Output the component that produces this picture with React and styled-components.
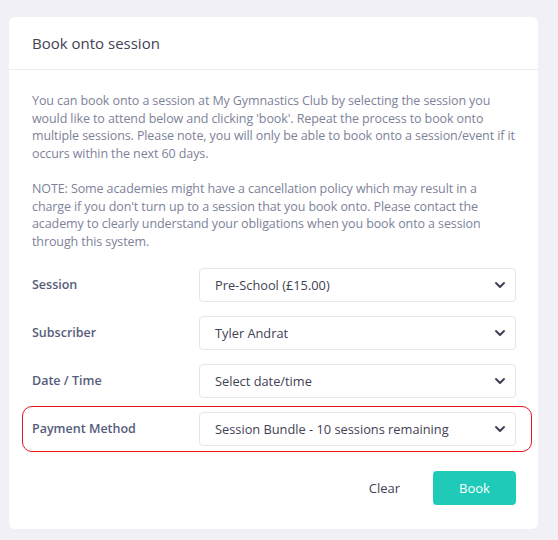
import React from "react";
import styled, { createGlobalStyle } from "styled-components";
import { ChevronDown } from "lucide-react";

const GlobalStyle = createGlobalStyle`
  html, body {
    margin: 0;
    padding: 0;
    background: #f0f0f6;
    font-family: "Open Sans", "Liberation Sans", sans-serif;
  }
`;

const Page = styled.div`
  padding: 17px 20px 11px 9px;
`;

const Card = styled.div`
  background: #ffffff;
  border-radius: 6px;
`;

const CardHeader = styled.div`
  height: 52px;
  display: flex;
  align-items: center;
  padding: 0 23px;
  border-bottom: 1px solid #ebedf3;
`;

const Title = styled.h3`
  margin: 0;
  font-size: 15px;
  font-weight: 400;
  color: #3f4254;
`;

const CardBody = styled.div`
  padding: 22px 22px 24px 23px;
`;

const Text = styled.p`
  margin: 0 0 17.6px;
  font-size: 12.5px;
  line-height: 17.6px;
  color: #7e8299;
  letter-spacing: -0.1px;
  white-space: nowrap;
`;

const Form = styled.div`
  display: flex;
  flex-direction: column;
  gap: 14px;
  margin-top: 17px;
`;

const Row = styled.div`
  display: grid;
  grid-template-columns: 167px 1fr;
  align-items: center;
  ${(p) =>
    p.$highlight &&
    `
    margin: -6px -16px -6px -10px;
    padding: 5px 15px 5px 9px;
    border: 1px solid #e8161b;
    border-radius: 10px;
  `}
`;

const Label = styled.label`
  font-size: 12.5px;
  font-weight: 600;
  color: #555d7a;
  margin-top: -1px;
`;

const SelectWrap = styled.div`
  position: relative;
`;

const Select = styled.select`
  width: 100%;
  height: 34px;
  appearance: none;
  border: 1px solid #e4e6ef;
  border-radius: 4px;
  background: #ffffff;
  padding: 0 32px 0 15px;
  font-family: inherit;
  font-size: 12.8px;
  color: #3f4254;
  outline: none;
`;

const Chevron = styled(ChevronDown)`
  position: absolute;
  right: 8px;
  top: 50%;
  transform: translateY(-50%);
  pointer-events: none;
  color: #3f4254;
`;

const Actions = styled.div`
  display: flex;
  justify-content: flex-end;
  align-items: center;
  gap: 17px;
  margin-top: 25px;
`;

const Button = styled.button`
  height: 34px;
  border: none;
  border-radius: 4px;
  font-family: inherit;
  font-size: 13px;
  padding: 0 ${(p) => (p.$primary ? "0" : "16px")};
  width: ${(p) => (p.$primary ? "83px" : "auto")};
  background: ${(p) => (p.$primary ? "#1fcbb8" : "transparent")};
  color: ${(p) => (p.$primary ? "#ffffff" : "#3f4254")};
  cursor: pointer;
`;

const fields = [
  { label: "Session", value: "Pre-School (£15.00)" },
  { label: "Subscriber", value: "Tyler Andrat" },
  { label: "Date / Time", value: "Select date/time" },
  { label: "Payment Method", value: "Session Bundle - 10 sessions remaining", highlight: true },
];

export default function App() {
  return (
    <>
      <GlobalStyle />
      <Page>
        <Card>
          <CardHeader>
            <Title>Book onto session</Title>
          </CardHeader>
          <CardBody>
            <Text>
              You can book onto a session at My Gymnastics Club by selecting the session you
              <br />
              would like to attend below and clicking 'book'. Repeat the process to book onto
              <br />
              multiple sessions. Please note, you will only be able to book onto a session/event if it
              <br />
              occurs within the next 60 days.
            </Text>
            <Text>
              NOTE: Some academies might have a cancellation policy which may result in a
              <br />
              charge if you don't turn up to a session that you book onto. Please contact the
              <br />
              academy to clearly understand your obligations when you book onto a session
              <br />
              through this system.
            </Text>
            <Form>
              {fields.map((f) => (
                <Row key={f.label} $highlight={f.highlight}>
                  <Label>{f.label}</Label>
                  <SelectWrap>
                    <Select defaultValue={f.value}>
                      <option>{f.value}</option>
                    </Select>
                    <Chevron size={16} strokeWidth={3} />
                  </SelectWrap>
                </Row>
              ))}
            </Form>
            <Actions>
              <Button>Clear</Button>
              <Button $primary>Book</Button>
            </Actions>
          </CardBody>
        </Card>
      </Page>
    </>
  );
}
